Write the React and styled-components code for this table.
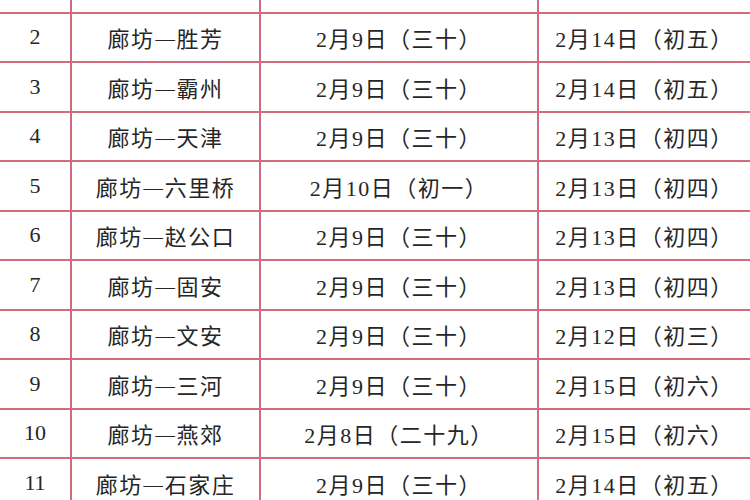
import React from "react";
import styled, { createGlobalStyle } from "styled-components";

const GlobalStyle = createGlobalStyle`
  html, body {
    margin: 0;
    padding: 0;
    background: #ffffff;
    overflow: hidden;
  }
  body {
    width: 750px;
    height: 500px;
  }
`;

const Table = styled.div`
  margin-top: -38px;
  width: 750px;
  font-family: "Liberation Serif", "Noto Sans CJK SC", serif;
  color: #262626;
`;

const Row = styled.div`
  display: grid;
  grid-template-columns: 70px 189px 278px 213px;
  height: 49.5px;
  box-sizing: border-box;
  border-top: ${(p) => (p.$first ? "none" : "2px solid #d26b7e")};
`;

const Cell = styled.div`
  display: flex;
  align-items: center;
  justify-content: center;
  box-sizing: border-box;
  border-left: ${(p) => (p.$edge ? "none" : "2px solid #d26b7e")};
  font-size: 22px;
  letter-spacing: ${(p) => (p.$wide ? "1.5px" : "0")};
  white-space: nowrap;
`;

const Dash = styled.span`
  display: inline-block;
  width: 1em;
  text-align: center;
  font-family: "Noto Sans CJK SC", sans-serif;
  font-weight: 300;
  transform: scaleX(1.12);
`;

const rows = [
  ["1", "北京", "2月9日（三十）", "2月14日（初五）"],
  ["2", "胜芳", "2月9日（三十）", "2月14日（初五）"],
  ["3", "霸州", "2月9日（三十）", "2月14日（初五）"],
  ["4", "天津", "2月9日（三十）", "2月13日（初四）"],
  ["5", "六里桥", "2月10日（初一）", "2月13日（初四）"],
  ["6", "赵公口", "2月9日（三十）", "2月13日（初四）"],
  ["7", "固安", "2月9日（三十）", "2月13日（初四）"],
  ["8", "文安", "2月9日（三十）", "2月12日（初三）"],
  ["9", "三河", "2月9日（三十）", "2月15日（初六）"],
  ["10", "燕郊", "2月8日（二十九）", "2月15日（初六）"],
  ["11", "石家庄", "2月9日（三十）", "2月14日（初五）"],
];

const App = () => {
  return (
    <>
      <GlobalStyle />
      <Table>
        {rows.map((r, i) => (
          <Row key={r[0]} $first={i === 0}>
            <Cell $edge>{r[0]}</Cell>
            <Cell $wide>
              廊坊<Dash>—</Dash>{r[1]}
            </Cell>
            <Cell $wide>{r[2]}</Cell>
            <Cell $wide>{r[3]}</Cell>
          </Row>
        ))}
      </Table>
    </>
  );
};

export default App;
